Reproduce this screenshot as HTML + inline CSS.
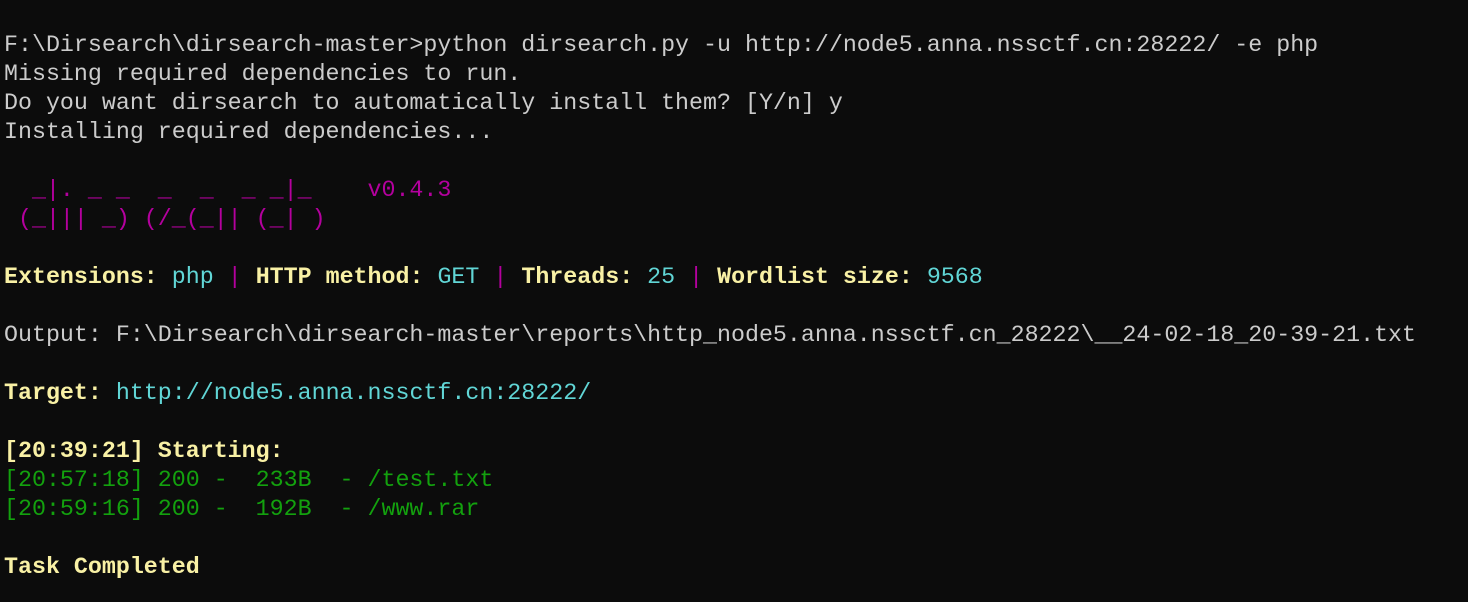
<!DOCTYPE html>
<html><head><meta charset="utf-8"><style>
html,body{margin:0;padding:0;background:#0c0c0c;width:1468px;height:602px;overflow:hidden}
pre{margin:0;padding:31px 0 0 4px;font-family:"Liberation Mono",monospace;font-size:23.3px;line-height:29px;color:#cccccc;white-space:pre}
.y{color:#f9f1a5;font-weight:bold}.c{color:#61d6d6}.m{color:#b4009e}.g{color:#13a10e}
</style></head><body><pre>F:\Dirsearch\dirsearch-master&gt;python dirsearch.py -u http://node5.anna.nssctf.cn:28222/ -e php
Missing required dependencies to run.
Do you want dirsearch to automatically install them? [Y/n] y
Installing required dependencies...

<span class="m">  _|. _ _  _  _  _ _|_    v0.4.3
 (_||| _) (/_(_|| (_| )</span>

<span class="y">Extensions:</span> <span class="c">php</span> <span class="m">|</span> <span class="y">HTTP method:</span> <span class="c">GET</span> <span class="m">|</span> <span class="y">Threads:</span> <span class="c">25</span> <span class="m">|</span> <span class="y">Wordlist size:</span> <span class="c">9568</span>

Output: F:\Dirsearch\dirsearch-master\reports\http_node5.anna.nssctf.cn_28222\__24-02-18_20-39-21.txt

<span class="y">Target:</span> <span class="c">http://node5.anna.nssctf.cn:28222/</span>

<span class="y">[20:39:21] Starting:</span>
<span class="g">[20:57:18] 200 -  233B  - /test.txt</span>
<span class="g">[20:59:16] 200 -  192B  - /www.rar</span>

<span class="y">Task Completed</span></pre></body></html>
